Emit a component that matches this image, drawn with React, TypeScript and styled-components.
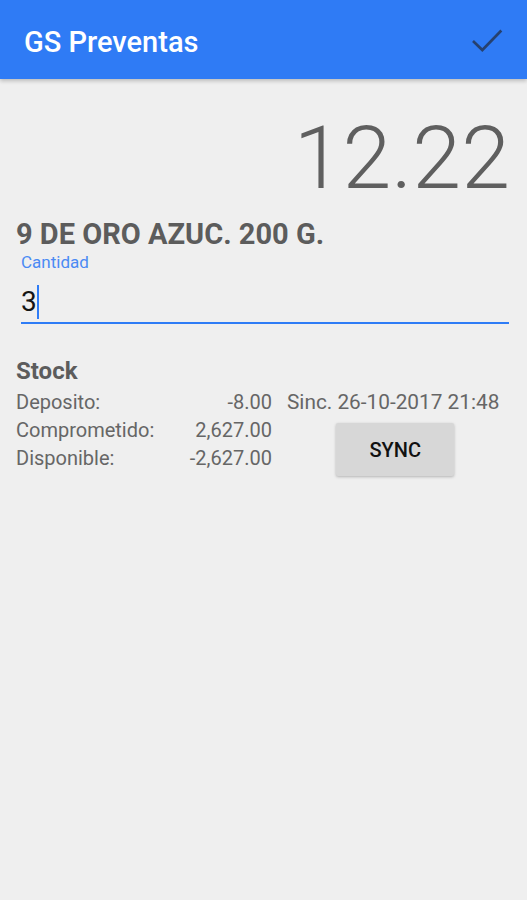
import React, { useState } from 'react'
import styled, { createGlobalStyle } from 'styled-components'

const GlobalStyle = createGlobalStyle`
  html, body {
    margin: 0;
    padding: 0;
    background: #efefef;
    font-family: Roboto, 'Noto Sans', Arial, sans-serif;
  }
`

const Screen = styled.div`
  width: 527px;
  min-height: 900px;
  background: #efefef;
`

const AppBar = styled.header`
  height: 79px;
  background: #2f7bf5;
  display: flex;
  align-items: center;
  justify-content: space-between;
  padding: 0 20px 0 24px;
  box-shadow: 0 2px 4px rgba(0, 0, 0, 0.22);
  position: relative;
`

const Title = styled.h1`
  margin: 0;
  padding-top: 4px;
  color: #fff;
  font-size: 29px;
  font-weight: 500;
`

const CheckButton = styled.button`
  border: 0;
  background: none;
  padding: 0;
  width: 40px;
  height: 40px;
  display: flex;
  align-items: center;
  justify-content: center;
`

const Content = styled.main`
  padding: 0 16px;
`

const Price = styled.div`
  text-align: right;
  font-size: 88px;
  font-weight: 300;
  color: #5f5f5f;
  line-height: 1;
  padding-top: 35px;
  margin-right: 1px;
`

const ProductName = styled.h2`
  margin: 16px 0 0;
  font-size: 29px;
  font-weight: 700;
  color: #5c5c5c;
  line-height: 32px;
`

const Field = styled.label`
  display: block;
  margin: 2px 2px 0 5px;
`

const FieldLabel = styled.span`
  display: block;
  color: #4a8af4;
  font-size: 17px;
  line-height: 20px;
`

const InputLine = styled.div`
  border-bottom: 2px solid #2e7cf6;
  font-size: 28px;
  line-height: 34px;
  color: #151515;
  padding: 13px 0 3px;
`

const Caret = styled.span`
  display: inline-block;
  width: 2px;
  height: 34px;
  background: #2e7cf6;
  vertical-align: top;
  margin-left: 0;
`

const StockTitle = styled.h3`
  margin: 33px 0 0;
  font-size: 24px;
  font-weight: 700;
  color: #5c5c5c;
  line-height: 28px;
`

const StockGrid = styled.div`
  display: flex;
  align-items: flex-start;
  gap: 15px;
  margin-top: 3px;
`

const Rows = styled.div`
  width: 256px;
  display: grid;
  grid-template-columns: 1fr auto;
`

const Cell = styled.span<{ $right?: boolean }>`
  font-size: 20px;
  line-height: 28px;
  color: #666;
  text-align: ${(p) => (p.$right ? 'right' : 'left')};
`

const SyncColumn = styled.div`
  display: flex;
  flex-direction: column;
  align-items: center;
`

const SyncText = styled.span`
  font-size: 20.8px;
  line-height: 28px;
  color: #666;
  white-space: nowrap;
`

const SyncButton = styled.button`
  margin: 7px 0 0 4px;
  width: 118px;
  height: 53px;
  border: 0;
  border-radius: 2px;
  background: #d7d7d7;
  box-shadow: 0 1px 3px rgba(0, 0, 0, 0.25);
  font-family: inherit;
  font-size: 20px;
  font-weight: 500;
  color: #111;
`

const stock = [
  { label: 'Deposito:', value: '-8.00' },
  { label: 'Comprometido:', value: '2,627.00' },
  { label: 'Disponible:', value: '-2,627.00' },
]

const App: React.FC = () => {
  const [qty] = useState('3')

  return (
    <Screen>
      <GlobalStyle />
      <AppBar>
        <Title>GS Preventas</Title>
        <CheckButton aria-label="Aceptar">
          <svg width="42" height="42" viewBox="0 0 24 24">
            <path
              d="M3.6 12.6 L9.2 18 L20.6 6.3"
              fill="none"
              stroke="#26416f"
              strokeWidth="1.6"
            />
          </svg>
        </CheckButton>
      </AppBar>
      <Content>
        <Price>12.22</Price>
        <ProductName>9 DE ORO AZUC. 200 G.</ProductName>
        <Field>
          <FieldLabel>Cantidad</FieldLabel>
          <InputLine>
            {qty}
            <Caret />
          </InputLine>
        </Field>
        <StockTitle>Stock</StockTitle>
        <StockGrid>
          <Rows>
            {stock.map((s) => (
              <React.Fragment key={s.label}>
                <Cell>{s.label}</Cell>
                <Cell $right>{s.value}</Cell>
              </React.Fragment>
            ))}
          </Rows>
          <SyncColumn>
            <SyncText>Sinc. 26-10-2017 21:48</SyncText>
            <SyncButton>SYNC</SyncButton>
          </SyncColumn>
        </StockGrid>
      </Content>
    </Screen>
  )
}

export default App
